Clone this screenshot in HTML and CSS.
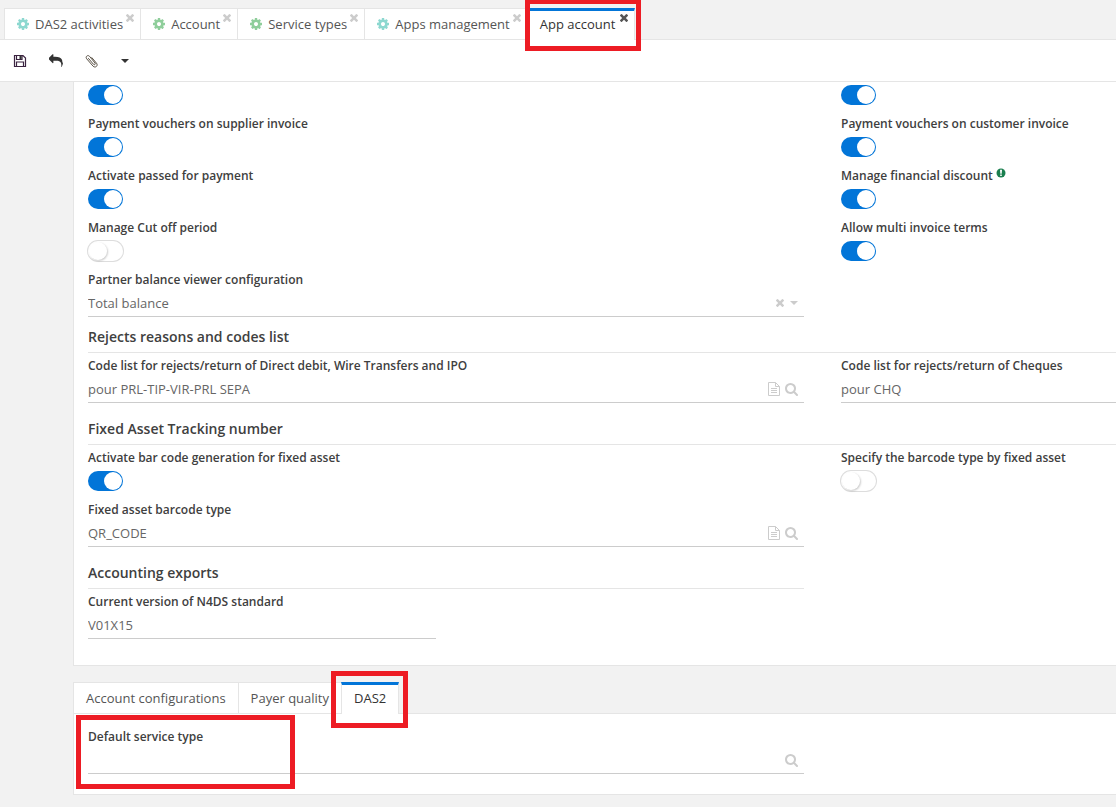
FILE: index.html
```html
<!DOCTYPE html>
<html lang="en">
<head>
<meta charset="utf-8">
<title>App account</title>
<link rel="stylesheet" href="styles.css">
</head>
<body>
<svg class="sprite" aria-hidden="true">
  <symbol id="cog" viewBox="128 128 1536 1536"><path d="M1152 896q0-106-75-181t-181-75-181 75-75 181 75 181 181 75 181-75 75-181zm512-109v222q0 12-8 23t-20 13l-185 28q-19 54-39 91 35 50 107 138 10 12 10 25t-9 23q-27 37-99 108t-94 71q-12 0-26-9l-138-108q-44 23-91 38-16 136-29 186-7 28-36 28h-222q-14 0-24.500-8.500t-11.500-21.500l-28-184q-49-16-90-37l-141 107q-10 9-25 9-14 0-25-11-126-114-165-168-7-10-7-23 0-12 8-23 15-21 51-66.500t54-70.500q-27-50-41-99l-183-27q-13-2-21-12.500t-8-23.500v-222q0-12 8-23t19-13l186-28q14-46 39-92-40-57-107-138-10-12-10-24 0-10 9-23 26-36 98.500-107.500t94.500-71.500q13 0 26 10l138 107q44-23 91-38 16-136 29-186 7-28 36-28h222q14 0 24.500 8.500t11.500 21.500l28 184q49 16 90 37l142-107q9-9 24-9 13 0 25 10 129 119 165 170 7 8 7 22 0 12-8 23-15 21-51 66.500t-54 70.500q26 50 41 98l183 28q13 2 21 12.500t8 23.500z"/></symbol>
  <symbol id="times" viewBox="302 366 1188 1188"><path d="M1490 1322q0 40-28 68l-136 136q-28 28-68 28t-68-28l-294-294-294 294q-28 28-68 28t-68-28l-136-136q-28-28-28-68t28-68l294-294-294-294q-28-28-28-68t28-68l136-136q28-28 68-28t68 28l294 294 294-294q28-28 68-28t68 28l136 136q28 28 28 68t-28 68l-294 294 294 294q28 28 28 68z"/></symbol>
  <symbol id="search" viewBox="64 128 1664 1664"><path d="M1216 832q0-185-131.500-316.500t-316.500-131.500-316.500 131.500-131.500 316.500 131.500 316.500 316.500 131.500 316.500-131.500 131.500-316.500zm512 832q0 52-38 90t-90 38q-54 0-90-38l-343-342q-179 124-399 124-143 0-273.500-55.500t-225-150-150-225-55.500-273.500 55.500-273.500 150-225 225-150 273.500-55.500 273.500 55.500 225 150 150 225 55.500 273.500q0 220-124 399l343 343q37 37 37 90z"/></symbol>
  <symbol id="file" viewBox="0 0 12 14"><path fill="none" stroke="currentColor" d="M.5.5h7l4 4v9h-11zM7.500.5v4h4M3 6.500h6M3 8.500h6M3 10.500h6"/></symbol>
  <symbol id="caret" viewBox="0 0 8 4"><path d="M0 0h8L4 4z"/></symbol>
</svg>

<nav class="tabs app-tabs">
  <div class="tab"><svg class="cog teal"><use href="#cog"/></svg><a href="#das2-activities">DAS2 activities</a><button class="close" aria-label="Close DAS2 activities"><svg><use href="#times"/></svg></button></div>
  <div class="tab"><svg class="cog green"><use href="#cog"/></svg><a href="#account">Account</a><button class="close" aria-label="Close Account"><svg><use href="#times"/></svg></button></div>
  <div class="tab"><svg class="cog green"><use href="#cog"/></svg><a href="#service-types">Service types</a><button class="close" aria-label="Close Service types"><svg><use href="#times"/></svg></button></div>
  <div class="tab"><svg class="cog teal"><use href="#cog"/></svg><a href="#apps-management">Apps management</a><button class="close" aria-label="Close Apps management"><svg><use href="#times"/></svg></button></div>
  <div class="tab active"><a href="#app-account">App account</a><button class="close" aria-label="Close App account"><svg><use href="#times"/></svg></button><span class="mark"></span></div>
</nav>

<div class="toolbar">
  <button aria-label="Save"><svg viewBox="0 0 14 14"><path fill="none" stroke="#3b2340" stroke-width="1.200" d="M1.500 1.500h8.500l2.500 2.500v8.500h-11zM3.500 12.500v-4.500h7v4.500M3.500 1.500v4h5.500v-4"/><path fill="#333" d="M6.500 2h2v3h-2z"/></svg></button>
  <button aria-label="Undo"><svg viewBox="0 0 1792 1792"><path d="M1792 1120q0 166-127 451-3 7-10.500 24t-13.500 30-13 22q-12 17-28 17-15 0-23.500-10t-8.500-25q0-9 2.500-26.500t2.500-23.500q5-68 5-123 0-112-19.500-200.500t-54-153.500-89-112-118-76.500-148.500-42.500-172-14-192-4.500h-224v256q0 26-19 45t-45 19-45-19l-512-512q-19-19-19-45t19-45l512-512q19-19 45-19t45 19 19 45v256h224q713 0 875 403 53 134 53 333z"/></svg></button>
  <button aria-label="Attachments"><svg viewBox="0 0 14 14"><path fill="none" stroke="#5c5347" stroke-linecap="round" d="M3.500 4.500l5 5.800c1 1.100 2.400-.2 1.500-1.300L4.500 2.300C2.700.4 0 2.800 1.700 4.800l6.300 7.300c2.300 2.400 5.500-.4 3.500-2.900L6.800 3.600"/></svg></button>
  <button class="more" aria-label="More actions"><svg><use href="#caret"/></svg></button>
</div>

<main class="content">
  <section class="panel">
    <div class="grid">
      <div class="field"><input type="checkbox" class="switch" aria-label="Enabled" checked></div>
      <div class="field"><input type="checkbox" class="switch" aria-label="Enabled" checked></div>
      <div class="field"><label for="supplier">Payment vouchers on supplier invoice</label><input type="checkbox" class="switch" id="supplier" checked></div>
      <div class="field"><label for="customer">Payment vouchers on customer invoice</label><input type="checkbox" class="switch" id="customer" checked></div>
      <div class="field"><label for="passed">Activate passed for payment</label><input type="checkbox" class="switch" id="passed" checked></div>
      <div class="field"><label for="discount">Manage financial discount <svg class="info" viewBox="0 0 10 10"><circle cx="5" cy="5" r="4.500"/><path fill="#fff" d="M4 1.800h2L5.700 5.800H4.300zM4.200 6.500h1.600v1.500H4.200z"/></svg></label><input type="checkbox" class="switch" id="discount" checked></div>
      <div class="field"><label for="cutoff">Manage Cut off period</label><input type="checkbox" class="switch" id="cutoff"></div>
      <div class="field"><label for="multi">Allow multi invoice terms</label><input type="checkbox" class="switch" id="multi" checked></div>
      <div class="field"><label for="partner">Partner balance viewer configuration</label>
        <div class="box"><select id="partner"><option>Total balance</option></select><button class="clear" aria-label="Clear"><svg><use href="#times"/></svg></button><svg class="arrow"><use href="#caret"/></svg></div></div>
    </div>

    <h2>Rejects reasons and codes list</h2>
    <div class="grid last">
      <div class="field"><label for="debit">Code list for rejects/return of Direct debit, Wire Transfers and IPO</label>
        <div class="box"><input type="text" id="debit" value="pour PRL-TIP-VIR-PRL SEPA"><button class="doc" aria-label="Open"><svg><use href="#file"/></svg></button><button class="find" aria-label="Search"><svg><use href="#search"/></svg></button></div></div>
      <div class="field"><label for="cheques">Code list for rejects/return of Cheques</label>
        <div class="box"><input type="text" id="cheques" value="pour CHQ"></div></div>
    </div>

    <h2>Fixed Asset Tracking number</h2>
    <div class="grid last">
      <div class="field"><label for="barcode">Activate bar code generation for fixed asset</label><input type="checkbox" class="switch" id="barcode" checked></div>
      <div class="field"><label for="specify">Specify the barcode type by fixed asset</label><input type="checkbox" class="switch" id="specify"></div>
      <div class="field"><label for="type">Fixed asset barcode type</label>
        <div class="box"><input type="text" id="type" value="QR_CODE"><button class="doc" aria-label="Open"><svg><use href="#file"/></svg></button><button class="find" aria-label="Search"><svg><use href="#search"/></svg></button></div></div>
    </div>

    <div class="grid last">
      <div>
        <h2>Accounting exports</h2>
        <div class="halves">
          <div class="field"><label for="n4ds">Current version of N4DS standard</label>
            <div class="box"><input type="text" id="n4ds" value="V01X15"></div></div>
        </div>
      </div>
    </div>
  </section>

  <nav class="tabs sub-tabs">
    <div class="tab"><a href="#configurations">Account configurations</a></div>
    <div class="tab"><a href="#payer">Payer quality</a></div>
    <div class="tab active"><a href="#das2">DAS2</a><span class="mark"></span></div>
  </nav>
  <section class="panel das2" id="das2">
    <div class="grid">
      <div class="field"><label for="service">Default service type</label>
        <div class="box"><input type="text" id="service"><button class="find" aria-label="Search"><svg><use href="#search"/></svg></button></div></div>
    </div>
    <span class="mark"></span>
  </section>
</main>
</body>
</html>
```
FILE: styles.css
```css
* { box-sizing: border-box; }

body {
  margin: 0;
  min-height: 100vh;
  background: #f2f2f2;
  color: #333;
  font: 13px/20px "Open Sans", "Noto Sans", sans-serif;
  overflow-x: hidden;
}

svg { display: block; fill: currentColor; }
.sprite { position: absolute; width: 0; height: 0; }

button {
  display: block;
  padding: 0;
  border: 0;
  background: none;
  color: inherit;
}

/* Tabs */
.tabs { display: flex; border-bottom: 1px solid #e5e5e5; }
.app-tabs { padding: 8px 4px 0; }

.tab {
  position: relative;
  display: flex;
  align-items: center;
  height: 31px;
  padding-left: 12px;
  border-left: 1px solid #e5e5e5;
  border-top: 1px solid #e5e5e5;
  background: #fff;
  color: #555;
}

.tab a { color: inherit; text-decoration: none; }

.tab.active {
  height: 32px;
  margin-bottom: -1px;
  padding-bottom: 3px;
  border-top: 3px solid #0275d8;
  border-right: 1px solid #e5e5e5;
  color: #333;
}

.cog { width: 12px; height: 12px; margin-right: 6px; }
.teal { color: #8dd8d0; }
.green { color: #8fce9b; }

.close { align-self: flex-start; margin: 5px 5px 0 3px; color: #ccc; }
.close svg { width: 8px; height: 8px; margin-right: 1px; }
.active .close { margin: 3px 5px 0; color: #555; }

/* Toolbar */
.toolbar {
  display: flex;
  align-items: center;
  gap: 22px;
  height: 42px;
  padding: 0 13px;
  border-bottom: 1px solid #e5e5e5;
  background: #fff;
}

.toolbar svg { width: 14px; height: 14px; }
.toolbar .more svg { width: 8px; height: 4px; }

/* Form */
.content { padding-left: 73px; }

.panel {
  padding: 0 0 15px 14px;
  border-left: 1px solid #e5e5e5;
  border-bottom: 1px solid #e5e5e5;
  background: #fff;
}

.grid {
  display: grid;
  grid-template-columns: 716fr 275fr;
  column-gap: 37px;
}

.grid.last { padding-bottom: 6px; }
.halves { display: grid; grid-template-columns: 1fr 1fr; column-gap: 20px; }

h2 {
  margin: 0 0 3px;
  padding: 5px 0;
  border-bottom: 1px solid #e5e5e5;
  color: #404040;
  font-size: 14px;
  font-weight: 600;
  line-height: 20px;
}

label {
  display: flex;
  color: #404040;
  font-size: 12px;
  font-weight: 600;
  line-height: 20px;
}

.info { width: 10px; height: 10px; margin: 2px 0 0 3px; color: #1a7f4f; }

.switch {
  appearance: none;
  display: block;
  width: 35px;
  height: 20px;
  margin: 3px 0 9px;
  padding: 1px;
  border-radius: 10px;
  background: #fff;
  box-shadow: 0 0 0 1px #ddd;
}

.switch::before {
  content: "";
  display: block;
  width: 18px;
  height: 18px;
  border-radius: 9px;
  background: #fff;
  box-shadow: 1px 1px 2px rgba(0, 0, 0, 0.2);
}

.switch:checked { background: #0275d8; box-shadow: none; }
.switch:checked::before { margin-left: auto; box-shadow: none; }

.box {
  display: flex;
  align-items: center;
  height: 27px;
  margin-bottom: 5px;
  padding-right: 6px;
  border-bottom: 1px solid #ccc;
  color: #ccc;
}

.box input,
.box select {
  appearance: none;
  flex: 1;
  min-width: 0;
  padding: 0;
  border: 0;
  outline: 0;
  background: transparent;
  color: #666;
  font: 13px/20px "Open Sans", "Noto Sans", sans-serif;
}

.find svg { width: 13px; height: 13px; }
.doc svg { width: 12px; height: 14px; margin-right: 5px; }
.clear svg { width: 8px; height: 8px; }
.arrow { width: 8px; height: 4px; margin-left: 6px; }

/* Lower tabs */
.sub-tabs { margin-top: 16px; }
.sub-tabs .tab { padding-right: 12px; }
.das2 { position: relative; padding-top: 13px; }

/* Highlight frames */
.mark {
  position: absolute;
  border: 5px solid #ed1c24;
  pointer-events: none;
}

.app-tabs .mark { inset: -12px -7px -11px -3px; z-index: 1; }
.sub-tabs .mark { inset: -14px -10px -14px -11px; z-index: 1; }
.das2 .mark { top: 1px; left: 2px; width: 219px; height: 74px; }
```
